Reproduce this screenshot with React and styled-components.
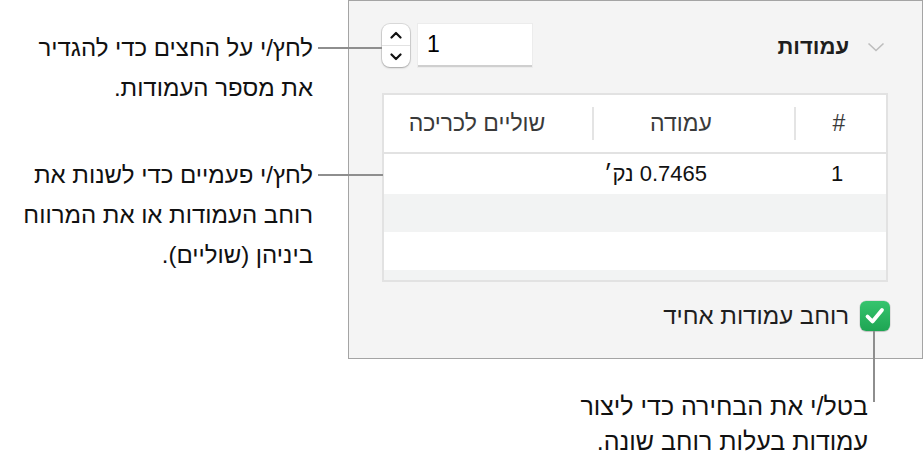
import styled, { createGlobalStyle } from "styled-components";

const GlobalStyle = createGlobalStyle`
  html, body {
    margin: 0;
    padding: 0;
    background: #ffffff;
  }
  body {
    font-family: "Liberation Sans", "DejaVu Sans", sans-serif;
  }
`;

const ROWS = [
  { num: "1", width: "0.7465 נק׳", gutter: "" },
  { num: "", width: "", gutter: "" },
  { num: "", width: "", gutter: "" },
  { num: "", width: "", gutter: "" },
];

const App = () => {
  return (
    <>
      <GlobalStyle />
      <Page>
        <Callouts>
          <Callout $top={28}>
            לחץ/י על החצים כדי להגדיר
            <br />
            את מספר העמודות.
          </Callout>
          <Callout $top={47}>
            לחץ/י פעמיים כדי לשנות את
            <br />
            רוחב העמודות או את המרווח
            <br />
            ביניהן (שוליים).
          </Callout>
        </Callouts>

        <Panel>
          <HeaderRow>
            <Title>
              <svg width="18" height="10" viewBox="0 0 18 10">
                <path d="M1.5 1.5 L9 8.5 L16.5 1.5" fill="none" stroke="#bdbdbd" strokeWidth="1.6" />
              </svg>
              <span>עמודות</span>
            </Title>
            <Controls>
              <NumberField>1</NumberField>
              <Stepper>
                <StepButton>
                  <svg width="12" height="8" viewBox="0 0 12 8">
                    <path d="M1.5 6.5 L6 2 L10.5 6.5" fill="none" stroke="#111" strokeWidth="2.2" strokeLinecap="round" strokeLinejoin="round" />
                  </svg>
                </StepButton>
                <StepButton $bottom>
                  <svg width="12" height="8" viewBox="0 0 12 8">
                    <path d="M1.5 1.5 L6 6 L10.5 1.5" fill="none" stroke="#111" strokeWidth="2.2" strokeLinecap="round" strokeLinejoin="round" />
                  </svg>
                </StepButton>
              </Stepper>
            </Controls>
          </HeaderRow>

          <Table>
            <HeadRow>
              <HeadCell $w={90} $pad={4}>#</HeadCell>
              <Divider />
              <HeadCell $w={200} $pad={26}>עמודה</HeadCell>
              <Divider />
              <HeadCell $w={206} $pad={24}>שוליים לכריכה</HeadCell>
            </HeadRow>
            {ROWS.map((row, idx) => (
              <BodyRow key={idx} $alt={idx % 2 === 1} $h={idx === 0 ? 40 : 38}>
                <NumCell>{row.num}</NumCell>
                <WidthCell>{row.width}</WidthCell>
                <GutterCell>{row.gutter}</GutterCell>
              </BodyRow>
            ))}
          </Table>

          <CheckRow>
            <CheckBox>
              <svg width="22" height="20" viewBox="0 0 22 20">
                <path d="M3.5 10.5 L8.5 15.5 L18 4" fill="none" stroke="#fff" strokeWidth="3.8" strokeLinecap="round" strokeLinejoin="round" />
              </svg>
            </CheckBox>
            <CheckLabel>רוחב עמודות אחיד</CheckLabel>
          </CheckRow>
        </Panel>

        <BottomCallout>
          בטל/י את הבחירה כדי ליצור
          <br />
          עמודות בעלות רוחב שונה.
        </BottomCallout>

        <Leader $left={318} $top={47} $w={64} $h={2} />
        <Leader $left={318} $top={174} $w={65} $h={2} />
        <Leader $left={873} $top={331} $w={2} $h={71} />
      </Page>
    </>
  );
};

const Page = styled.div`
  position: relative;
  width: 923px;
  height: 458px;
  display: grid;
  grid-template-columns: 348px 575px;
  grid-template-rows: 359px 1fr;
  overflow: hidden;
`;

const Callouts = styled.div`
  display: flex;
  flex-direction: column;
  align-items: flex-end;
  padding-right: 35px;
`;

const Callout = styled.p`
  margin: ${({ $top }) => $top}px 0 0;
  direction: rtl;
  text-align: right;
  font-size: 24px;
  line-height: 40px;
  white-space: nowrap;
  color: #111;
`;

const Panel = styled.div`
  box-sizing: border-box;
  width: 575px;
  height: 359px;
  background: #f4f4f4;
  border: 1px solid #a4a4a4;
  padding: 23px 34px 0 33px;
  display: flex;
  flex-direction: column;
`;

const HeaderRow = styled.div`
  display: flex;
  justify-content: space-between;
  align-items: center;
  height: 43px;
  direction: rtl;
  padding-right: 3px;
`;

const Title = styled.div`
  display: flex;
  align-items: center;
  gap: 18px;
  font-size: 22px;
  font-weight: 600;
  color: #1e1e1e;
  margin-top: 2px;
`;

const Controls = styled.div`
  display: flex;
  align-items: center;
  gap: 8px;
  direction: ltr;
  flex-direction: row-reverse;
`;

const NumberField = styled.div`
  box-sizing: border-box;
  width: 114px;
  height: 43px;
  background: #fff;
  border-bottom: 2px solid #cfcfcf;
  box-shadow: 0 0 0 1px #ececec;
  font-size: 23px;
  line-height: 41px;
  padding-left: 9px;
  color: #000;
`;

const Stepper = styled.div`
  width: 28px;
  height: 43px;
  border-radius: 8px;
  background: #fff;
  box-shadow: 0 0 0 1px rgba(0, 0, 0, 0.1), 0 1px 2px rgba(0, 0, 0, 0.25);
  display: flex;
  flex-direction: column;
  overflow: hidden;
`;

const StepButton = styled.div`
  flex: 1;
  display: flex;
  align-items: center;
  justify-content: center;
  border-top: ${({ $bottom }) => ($bottom ? "1px solid #e2e2e2" : "none")};
`;

const Table = styled.div`
  margin-top: 26px;
  height: 189px;
  box-sizing: border-box;
  border: 2px solid #e2e2e2;
  background: #fff;
  overflow: hidden;
  direction: rtl;
`;

const HeadRow = styled.div`
  display: flex;
  align-items: center;
  height: 57px;
  border-bottom: 2px solid #e2e2e2;
`;

const HeadCell = styled.div`
  box-sizing: border-box;
  width: ${({ $w }) => $w}px;
  padding-right: ${({ $pad }) => $pad}px;
  text-align: center;
  font-size: 23px;
  white-space: nowrap;
  color: #3a3a3a;
`;

const Divider = styled.div`
  width: 2px;
  height: 33px;
  background: #e4e4e4;
`;

const BodyRow = styled.div`
  display: flex;
  align-items: center;
  height: ${({ $h }) => $h}px;
  background: ${({ $alt }) => ($alt ? "#f2f3f3" : "#ffffff")};
  font-size: 22px;
  color: #111;
`;

const NumCell = styled.div`
  box-sizing: border-box;
  width: 92px;
  padding-right: 6px;
  text-align: center;
`;

const WidthCell = styled.div`
  box-sizing: border-box;
  width: 202px;
  padding-right: 87px;
  text-align: right;
  white-space: nowrap;
`;

const GutterCell = styled.div`
  flex: 1;
`;

const CheckRow = styled.div`
  display: flex;
  align-items: center;
  gap: 11px;
  margin-top: 19px;
  direction: rtl;
  margin-right: -2px;
`;

const CheckBox = styled.div`
  width: 30px;
  height: 30px;
  border-radius: 6px;
  background: linear-gradient(#36c46e, #1ea553);
  box-shadow: 0 0 0 0.5px rgba(0, 0, 0, 0.15), 0 1px 1px rgba(0, 0, 0, 0.15);
  display: flex;
  align-items: center;
  justify-content: center;
`;

const CheckLabel = styled.span`
  font-size: 24px;
  color: #1e1e1e;
`;

const BottomCallout = styled.p`
  grid-column: 1 / span 2;
  justify-self: end;
  margin: 30px 55px 0 0;
  direction: rtl;
  text-align: right;
  font-size: 25px;
  line-height: 35px;
  white-space: nowrap;
  color: #111;
`;

const Leader = styled.div`
  position: absolute;
  left: ${({ $left }) => $left}px;
  top: ${({ $top }) => $top}px;
  width: ${({ $w }) => $w}px;
  height: ${({ $h }) => $h}px;
  background: #8e8e8e;
`;

export default App;
